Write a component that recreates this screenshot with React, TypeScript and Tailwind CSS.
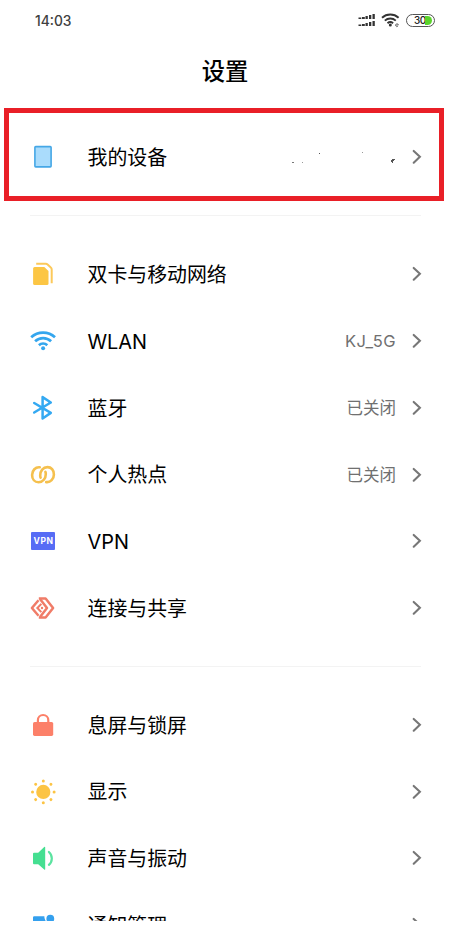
import type { ReactNode } from "react";

const Svg = ({ children }: { children: ReactNode }) => (
  <svg width="26" height="26" viewBox="0 0 26 26" fill="none" className="shrink-0">
    {children}
  </svg>
);

const DeviceIcon = () => (
  <Svg>
    <rect x="4.900" y="2.600" width="16.200" height="20.300" rx="0.800" fill="#aadcfc" stroke="#45a7e6" strokeWidth="1.600" />
  </Svg>
);

const SimIcon = () => (
  <Svg>
    <path d="M4.600 6h9.700l4.200 4v12.500a1.500 1.500 0 0 1-1.500 1.500H4.600a1.500 1.500 0 0 1-1.500-1.500V7.500a1.500 1.500 0 0 1 1.500-1.500Z" fill="#fcc644" />
    <path d="M6.200 2.700h9.600q1 0 1.800.7l3.200 3q.9.800.9 2v13.800" stroke="#fcc95a" strokeWidth="2" />
  </Svg>
);

const WlanIcon = () => (
  <Svg>
    <g stroke="#34a6ee" strokeWidth="2.700">
      <path d="M1.200 9.300a17.400 17.400 0 0 1 23.800 0" />
      <path d="M5.100 13.300a11.700 11.700 0 0 1 16 0" />
      <path d="M8.900 17.200a6.300 6.300 0 0 1 8.400 0" />
    </g>
    <circle cx="13.100" cy="20.200" r="2" fill="#34a6ee" />
  </Svg>
);

const BluetoothIcon = () => (
  <Svg>
    <path d="M4.200 8l16.600 9.900-8.200 5.600V2.100l8.200 5.400L4.200 17.500" stroke="#34a9f2" strokeWidth="2.500" strokeLinecap="round" strokeLinejoin="round" />
  </Svg>
);

const HotspotIcon = () => (
  <Svg>
    <g stroke="#f5c04e" strokeWidth="2.600" strokeLinecap="round">
      <path d="M9.800 5.300C5.500 4.700 2.100 8.500 2.100 13c0 4.300 2.600 7.300 6.400 7.300 4.500 0 7.300-4 7.300-8.300 0-1-.1-1.600-.4-2.200" />
      <path d="M16.200 20.100c4.300.6 7.700-3.200 7.700-7.700 0-4.300-2.600-7.300-6.400-7.300-4.500 0-7.300 4-7.300 8.300 0 1 .1 1.600.4 2.200" />
    </g>
  </Svg>
);

const VpnIcon = () => (
  <span className="flex h-[26px] w-[26px] shrink-0 items-center justify-center">
    <span className="flex h-[18px] w-6 items-center justify-center rounded-[1px] bg-[#576cf5] pl-px font-['Inter'] text-[8.500px] font-bold leading-none tracking-[0.500px] text-white">
      VPN
    </span>
  </span>
);

const ShareIcon = () => (
  <Svg>
    <g stroke="#f07c68" strokeWidth="2.500">
      <path d="M8.500 5.200L1.900 13l6.600 7.800" strokeLinejoin="round" />
      <path d="M8.800 3.500h6.800l7.500 9.500-7.500 9.500H8.800" strokeLinejoin="round" />
      <path d="M10 4l7 9-7 9" strokeLinejoin="round" />
      <path d="M11.300 8.900L7.400 13l3.900 4.100" strokeWidth="2.100" />
    </g>
    <circle cx="12" cy="13" r="1.200" fill="#f07c68" />
  </Svg>
);

const LockIcon = () => (
  <Svg>
    <path d="M7.900 12V8.200a5.200 5.200 0 0 1 10.400 0V12" stroke="#fc8069" strokeWidth="2.200" />
    <rect x="3" y="9.900" width="20.200" height="14" rx="1.600" fill="#fc8069" />
  </Svg>
);

const SunIcon = () => (
  <Svg>
    <circle cx="13.300" cy="12.900" r="7.100" fill="#fcc444" />
    <g fill="#fcc444">
      {[0, 45, 90, 135, 180, 225, 270, 315].map((a) => (
        <circle key={a} cx="13.300" cy="2.100" r="1.500" transform={`rotate(${a} 13.300 12.900)`} />
      ))}
    </g>
  </Svg>
);

const SoundIcon = () => (
  <Svg>
    <path d="M4 7.700h4.200L14.200 2q1-.7 1 .6v21.300q0 1.300-1 .6L8.200 19.300H4a1 1 0 0 1-1-1V8.700a1 1 0 0 1 1-1Z" fill="#45df91" />
    <path d="M18.900 7a8.500 8.500 0 0 1 0 12.800" stroke="#5be3a0" strokeWidth="2.200" strokeLinecap="round" />
  </Svg>
);

const NoticeIcon = () => (
  <Svg>
    <path d="M4.200 4.200h10.200a6 6 0 0 0 8.400 6v12.800H4.200a1.200 1.200 0 0 1-1.200-1.200V5.400a1.200 1.200 0 0 1 1.200-1.200Z" fill="#34a0ee" />
    <circle cx="20.300" cy="6.700" r="5" fill="#fff" />
    <circle cx="20.300" cy="6.700" r="3.900" fill="#34a0ee" />
  </Svg>
);

const Chevron = () => (
  <svg width="10" height="16" viewBox="0 0 10 16" fill="none" className="ml-4 shrink-0">
    <path d="M1.700 1.900L7.900 7.800l-6.200 5.900" stroke="#777" strokeWidth="2.100" strokeLinecap="round" />
  </svg>
);

/* What is left of the erased device name. */
const ErasedName = () => (
  <svg width="106" height="16" viewBox="0 0 106 16" className="shrink-0">
    <g fill="#555">
      <rect x="2" y="13" width="2" height="1" opacity=".8" />
      <rect x="12" y="13" width="1" height="1" opacity=".6" />
      <rect x="29" y="4" width="1" height="1" />
      <rect x="72" y="3" width="1" height="1" opacity=".6" />
      <path d="M101 11h1v-1h3v1h-1v1h-1v2h-1v-1h-1z" />
    </g>
  </svg>
);

type RowProps = { icon: ReactNode; label: string; value?: ReactNode };

const Row = ({ icon, label, value }: RowProps) => (
  <div className="flex h-[66.750px] items-center pl-[30px] pr-[28px]">
    {icon}
    <span className="ml-[31.500px] flex-1 whitespace-nowrap pt-[1.500px] text-[19.900px] leading-7 text-black">{label}</span>
    {value && <span className="text-[16.500px] leading-6 text-[#707070]">{value}</span>}
    <Chevron />
  </div>
);

const Divider = () => <div className="ml-[30px] mr-[29px] h-px bg-[#f3f3f3]" />;

const StatusBar = () => (
  <div className="flex h-10 items-center justify-between pl-[35px] pr-[15px]">
    <span className="pt-px font-['Inter'] text-[13.800px] font-medium leading-5 text-[#404040]">14:03</span>
    <div className="flex items-center">
      <svg width="18" height="14" viewBox="0 0 18 14" fill="#333">
        {[0, 7].map((y) =>
          [1.500, 2, 3, 4, 5].map((h, i) => (
            <rect key={`${y}-${i}`} x={i * 3.500 + 0.500} y={y + 6 - h} width={i < 2 ? 2.800 : 2.300} height={h} />
          )),
        )}
      </svg>
      <svg width="20" height="16" viewBox="0 0 20 16" fill="none" className="ml-[5px]">
        <g stroke="#333" strokeWidth="1.900">
          <path d="M1 5.700a12.500 12.500 0 0 1 16.600 0" />
          <path d="M3.800 8.600a8.300 8.300 0 0 1 11 0" />
          <path d="M6.500 11.300a4.300 4.300 0 0 1 5.600 0" />
        </g>
        <circle cx="9.300" cy="13" r="1.500" fill="#333" />
        <path d="M14.600 13h2.800a1.400 1.400 0 1 0-.5 1.300" stroke="#666" strokeWidth=".9" />
      </svg>
      <div className="ml-[5px] flex h-[13px] w-[29px] items-center rounded-full border border-[#555] bg-white py-px pl-[7px] pr-0.5">
        <span className="w-[11px] pt-px font-['Inter'] text-[10px] font-medium leading-[9px] tracking-[-0.500px] text-[#222]">30</span>
        <span className="h-[9px] flex-1 rounded-r-full bg-[#5bd32b]" />
      </div>
    </div>
  </div>
);

export default function App() {
  return (
    <div className="h-[937px] w-[450px] bg-white font-['Inter','Noto_Sans_CJK_SC',sans-serif]">
      <div className="h-[921px] overflow-hidden">
        <StatusBar />
        <h1 className="flex h-[68px] items-center justify-center pb-[8px] text-[23.300px] font-medium leading-8 text-black">
          <span className="font-['Noto_Sans_CJK_SC']">设置</span>
        </h1>
        <div className="ml-1 mr-1.5 h-[93px] border-[5px] border-[#e91f27] pt-[10.500px]">
          <div className="-ml-[9px] -mr-[11px]">
            <Row icon={<DeviceIcon />} label="我的设备" value={<ErasedName />} />
          </div>
        </div>
        <div className="pb-[25px] pt-3.5">
          <Divider />
        </div>
        <Row icon={<SimIcon />} label="双卡与移动网络" />
        <Row icon={<WlanIcon />} label="WLAN" value={<span className="tracking-[0.450px]">KJ_5G</span>} />
        <Row icon={<BluetoothIcon />} label="蓝牙" value="已关闭" />
        <Row icon={<HotspotIcon />} label="个人热点" value="已关闭" />
        <Row icon={<VpnIcon />} label="VPN" />
        <Row icon={<ShareIcon />} label="连接与共享" />
        <div className="pb-[25px] pt-6">
          <Divider />
        </div>
        <Row icon={<LockIcon />} label="息屏与锁屏" />
        <Row icon={<SunIcon />} label="显示" />
        <Row icon={<SoundIcon />} label="声音与振动" />
        <Row icon={<NoticeIcon />} label="通知管理" />
      </div>
    </div>
  );
}
